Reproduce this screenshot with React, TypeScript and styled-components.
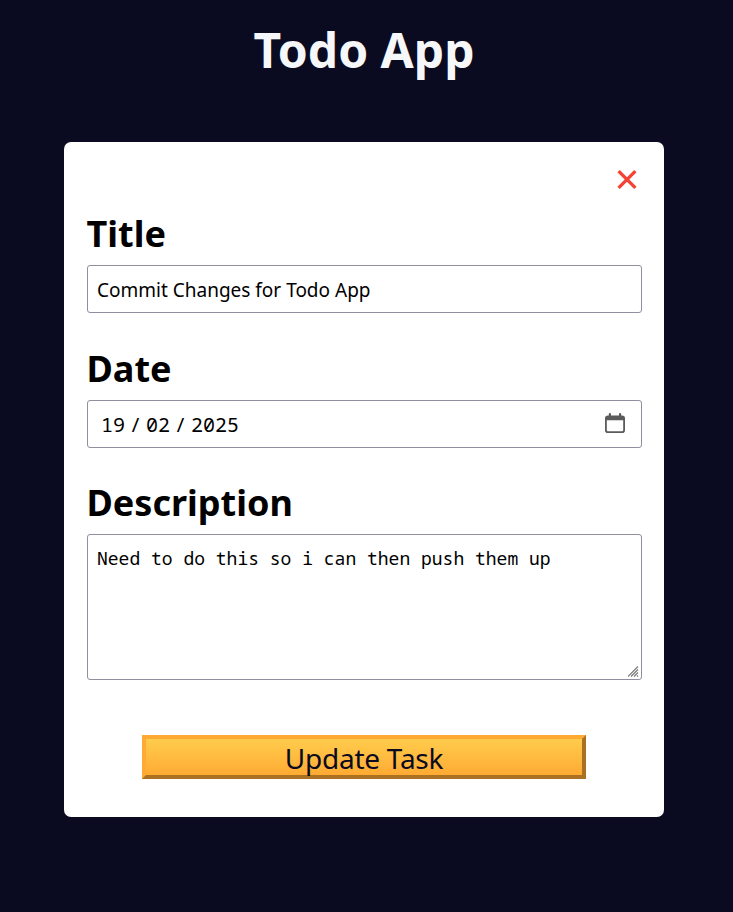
import React from "react";
import styled, { createGlobalStyle } from "styled-components";

const sans = '"Noto Sans", "Open Sans", sans-serif';
const mono = '"Noto Sans Mono", "Noto Sans Mono CJK SC", "DejaVu Sans Mono", monospace';

const GlobalStyle = createGlobalStyle`
  *, *::before, *::after { box-sizing: border-box; }
  html, body { margin: 0; background: #0a0a20; }
  body { font-family: ${sans}; color: #000; }
`;

const Page = styled.main`
  min-height: 912px;
  width: 733px;
  padding-right: 5px;
  display: flex;
  flex-direction: column;
  align-items: center;
  background: #0a0a20;
`;

const Heading = styled.h1`
  margin: 17px 0 59px;
  font-size: 48px;
  line-height: 66px;
  font-weight: 700;
  color: #f5f7f9;
  white-space: nowrap;
`;

const Card = styled.form`
  width: 600px;
  height: 675px;
  padding: 23px 22px 0 23px;
  border-radius: 7px;
  background: #fff;
  display: flex;
  flex-direction: column;
`;

const CloseButton = styled.button`
  align-self: flex-end;
  width: 30px;
  height: 30px;
  margin-bottom: 14px;
  padding: 0;
  border: 0;
  background: none;
  svg { display: block; }
`;

const Field = styled.div<{ $gap: number }>`
  display: flex;
  flex-direction: column;
  margin-bottom: ${(p) => p.$gap}px;
`;

const Label = styled.label`
  margin: 0 0 6px -0.5px;
  font-size: 36px;
  line-height: 50px;
  font-weight: 700;
`;

const TextInput = styled.input`
  height: 48px;
  width: 100%;
  padding: 2px 9px 0;
  border: 1px solid #8f8f9d;
  border-radius: 3px;
  outline: 0;
  background: #fff;
  font: 400 19px ${sans};
  color: #000;
`;

const DateBox = styled.div`
  height: 48px;
  display: flex;
  align-items: center;
  justify-content: space-between;
  padding: 0 16px 0 13px;
  border: 1px solid #8f8f9d;
  border-radius: 3px;
`;

const DateText = styled.span`
  display: flex;
  padding-top: 1px;
  font: 400 20px ${mono};
`;

const Slash = styled.span`
  width: 21px;
  text-align: center;
`;

const CalendarIcon = styled.svg`
  display: block;
  margin-bottom: 2px;
`;

const TextArea = styled.textarea`
  height: 146px;
  width: 100%;
  padding: 10px 9px;
  border: 1px solid #8f8f9d;
  border-radius: 3px;
  outline: 0;
  resize: none;
  background: #fff;
  font: 400 18px/26px ${mono};
  color: #000;
`;

const AreaWrap = styled.div`
  position: relative;
  height: 146px;
`;

const Grip = styled.svg`
  position: absolute;
  right: 3px;
  bottom: 3px;
`;

const Submit = styled.button`
  align-self: center;
  width: 444px;
  height: 44px;
  margin: 0 1px 0 0;
  padding: 2px 0 0;
  border: 4px solid;
  border-color: #ffaa33 #aa7122 #aa7122 #ffaa33;
  background: linear-gradient(#ffcc4d, #ffaa33);
  font: 400 28px/34px ${sans};
  letter-spacing: -0.25px;
  color: #0a0a20;
`;

export default function App() {
  return (
    <>
      <GlobalStyle />
      <Page>
        <Heading>Todo App</Heading>
        <Card>
          <CloseButton type="button" aria-label="Close">
            <svg width="30" height="30" viewBox="0 0 30 30">
              <path d="M6.6 6.1 L23.4 22.9 M23.4 6.1 L6.6 22.9" stroke="#f44336" strokeWidth="3.4" />
            </svg>
          </CloseButton>
          <Field $gap={31}>
            <Label htmlFor="title">Title</Label>
            <TextInput id="title" defaultValue="Commit Changes for Todo App" />
          </Field>
          <Field $gap={30}>
            <Label>Date</Label>
            <DateBox>
              <DateText>
                <span>19</span>
                <Slash>/</Slash>
                <span>02</span>
                <Slash>/</Slash>
                <span>2025</span>
              </DateText>
              <CalendarIcon width="20" height="20" viewBox="0 0 20 20">
                <path
                  fill="#5b5b5b"
                  fillRule="evenodd"
                  d="M3.8 1Q3.8 0 4.9 0Q6 0 6 1V2.4H14V1Q14 0 15.1 0Q16.2 0 16.2 1V2.4H17Q20 2.4 20 5.2V17.2Q20 20 17.2 20H2.8Q0 20 0 17.2V5.2Q0 2.4 3 2.4H3.8ZM1.8 7.2V17Q1.8 18.3 3 18.3H17Q18.2 18.3 18.2 17V7.2Z"
                />
              </CalendarIcon>
            </DateBox>
          </Field>
          <Field $gap={55}>
            <Label htmlFor="description">Description</Label>
            <AreaWrap>
              <TextArea id="description" spellCheck={false} defaultValue="Need to do this so i can then push them up" />
              <Grip width="11" height="11" viewBox="0 0 11 11">
                <path
                  d="M0 10.5L10 .5M3 10.5L10 3.5M6 10.5L10 6.5M9 10.5L10 9.5"
                  stroke="#777"
                  strokeWidth="1.1"
                />
              </Grip>
            </AreaWrap>
          </Field>
          <Submit type="button">Update Task</Submit>
        </Card>
      </Page>
    </>
  );
}
